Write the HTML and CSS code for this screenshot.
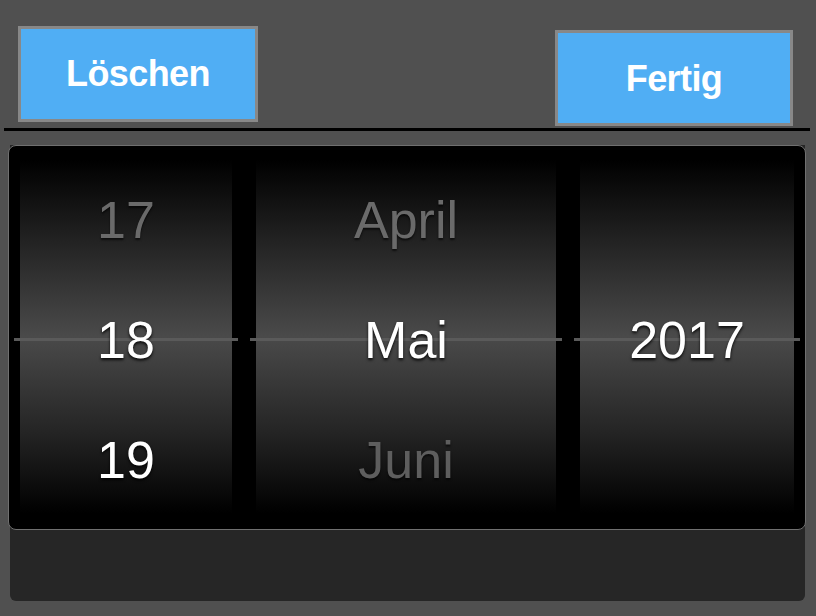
FILE: index.html
```html
<!DOCTYPE html>
<html lang="de">
<head>
  <meta charset="UTF-8">
  <meta name="viewport" content="width=device-width,initial-scale=1">
  <title>Datum wählen</title>
  <link rel="stylesheet" href="styles.css">
</head>
<body>
  <div class="toolbar">
    <button class="btn">Löschen</button>
    <button class="btn btn-done">Fertig</button>
  </div>
  <div class="divider"></div>

  <!-- Datumsauswahl -->
  <div class="sheet">
    <div class="picker">
      <div class="col col-day">
        <div class="sel-line"></div>
        <div class="row faded">17</div>
        <div class="row">18</div>
        <div class="row">19</div>
      </div>
      <div class="col col-month">
        <div class="sel-line"></div>
        <div class="row faded">April</div>
        <div class="row">Mai</div>
        <div class="row faded dim">Juni</div>
      </div>
      <div class="col col-year">
        <div class="sel-line"></div>
        <div class="row"></div>
        <div class="row">2017</div>
        <div class="row"></div>
      </div>
    </div>
  </div>
</body>
</html>
```

FILE: styles.css
```css
body { margin:0; background:#505050; font-family:"Liberation Sans", Arial, sans-serif; height:616px; overflow:hidden; }
.toolbar { display:flex; justify-content:space-between; align-items:flex-start; height:128px; box-sizing:border-box; padding:26px 23px 0 18px; }
.btn { width:240px; height:96px; box-sizing:border-box; border:3px solid #888; background:#50aef4; color:#fff; font-family:"Liberation Sans", Arial, sans-serif; font-weight:bold; font-size:36px; letter-spacing:-0.6px; padding:0; margin:0; }
.btn-done { width:238px; margin-top:4px; padding-top:2px; }
.divider { height:3px; background:#000; margin:0 6px 0 4px; }

/* Picker */
.sheet { margin:14px 11px 0 10px; height:456px; background:#262626; border-radius:0 0 6px 6px; }
.picker { display:flex; gap:24px; margin:0 -1px 0 -2px; height:385px; box-sizing:border-box; padding:14px 11px 0 11px; background:#000; border:1px solid #707070; border-radius:8px; }
.col { position:relative; height:353px; background:linear-gradient(to bottom, #000 0%, #1e1e1e 20%, #4a4a4a 50%, #262626 76%, #000 100%); text-align:center; }
.col-day { width:212px; }
.col-month { width:300px; }
.col-year { width:214px; }
.sel-line { position:absolute; left:-6px; right:-6px; top:178px; height:3px; background:#5a5a5a; }
.row { position:relative; height:120px; line-height:120px; font-size:52px; color:#fff; text-shadow:0 2px 3px rgba(0,0,0,0.85); }
.row.faded { color:#6a6a6a; text-shadow:0 2px 2px rgba(0,0,0,0.6); }
.row.dim { color:#5e5e5e; }
```
